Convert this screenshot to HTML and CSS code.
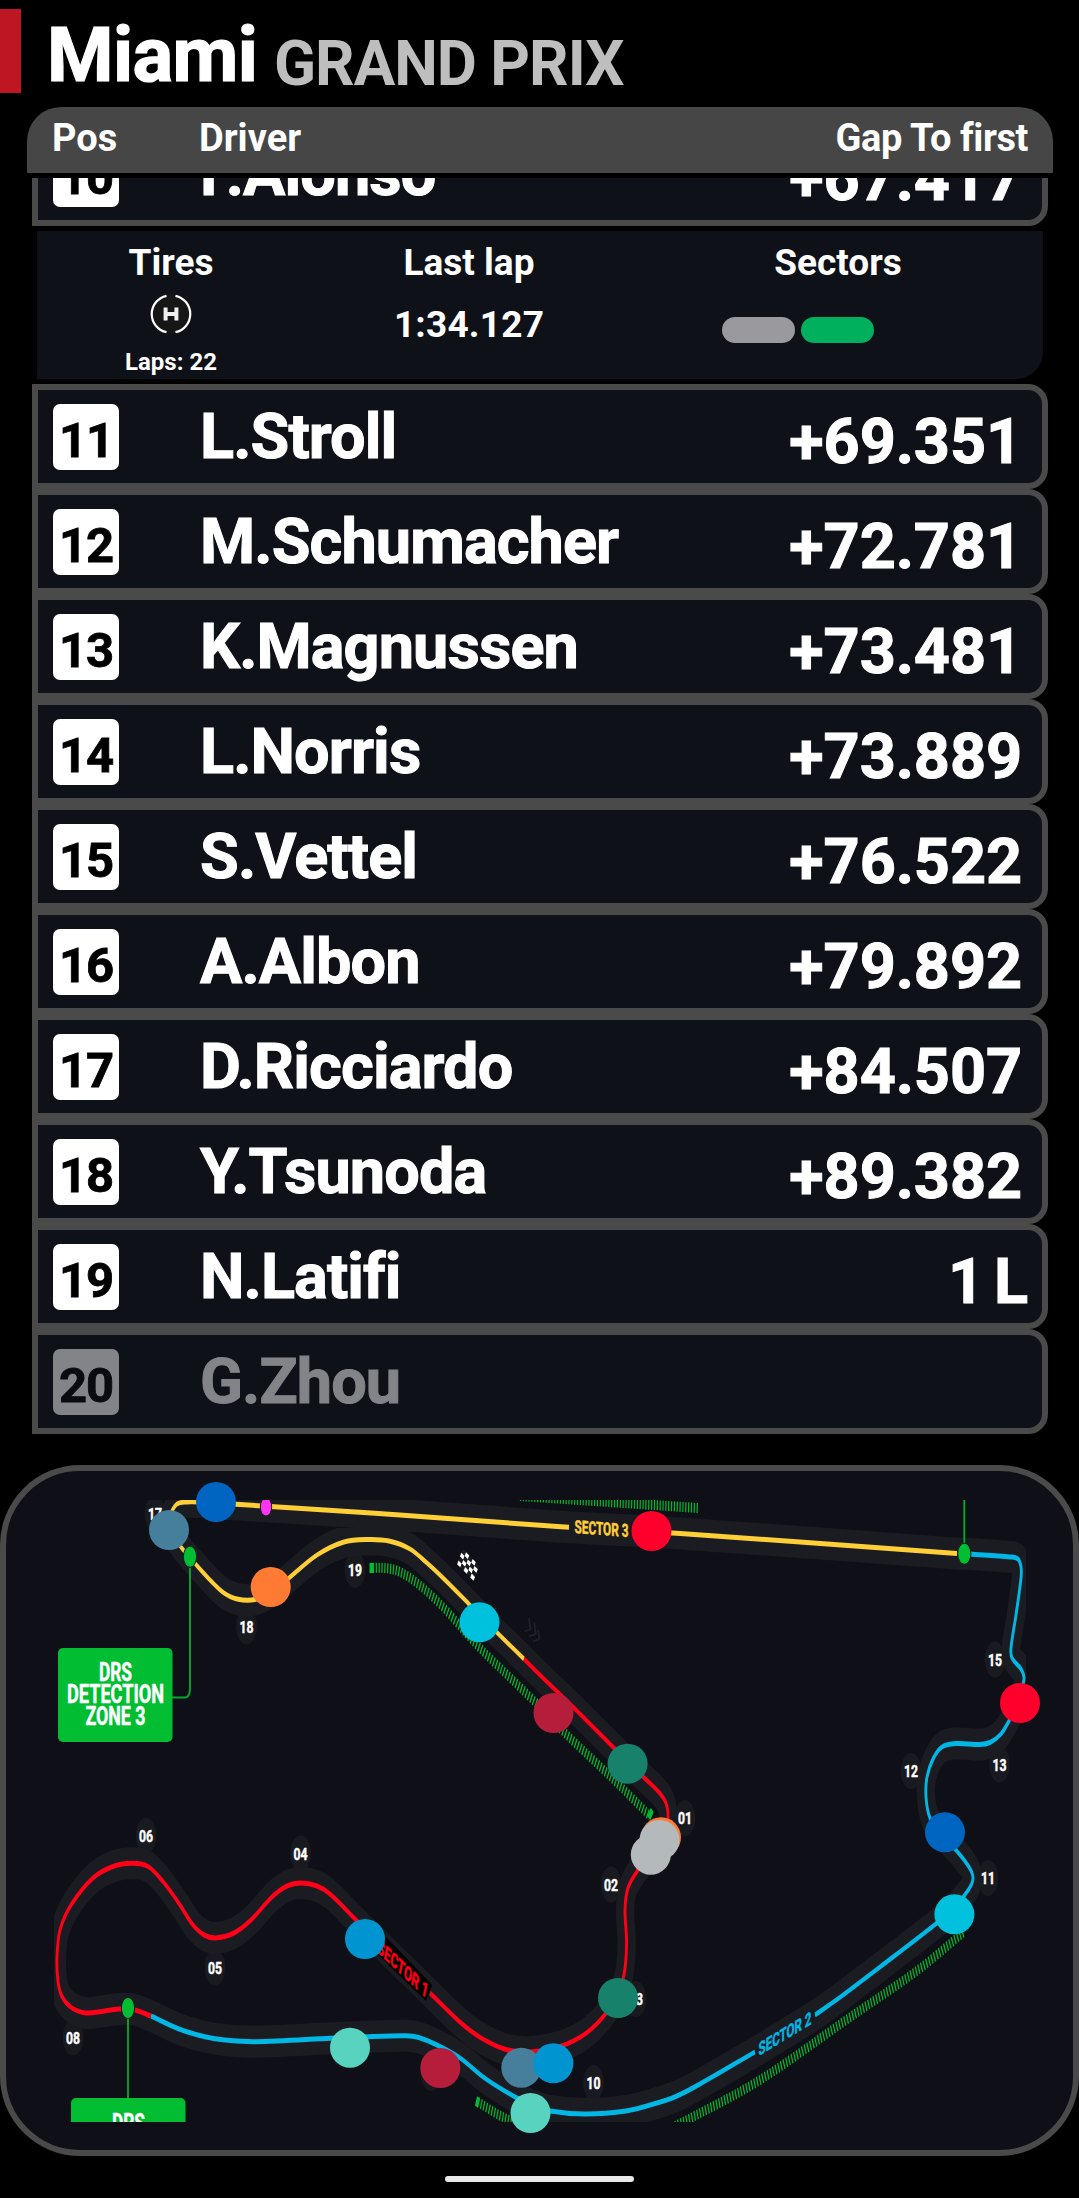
FILE: index.html
```
<!DOCTYPE html>
<html lang="en">
<head>
<meta charset="utf-8">
<title>Miami Grand Prix</title>
<link rel="stylesheet" href="styles.css">
</head>
<body>
<header class="title">
  <span class="title-mark"></span>
  <h1><span class="city">Miami</span><span class="event">GRAND PRIX</span></h1>
</header>

<div class="table-head">
  <span class="head-pos">Pos</span>
  <span class="head-driver">Driver</span>
  <span class="head-gap">Gap To first</span>
</div>

<main class="board">
  <div class="row first"><span class="pos">10</span><span class="name">F.Alonso</span><span class="gap">+67.417</span></div>
  <section class="details">
    <div class="detail tires">
      <h2>Tires</h2>
      <svg class="tire" viewBox="0 0 42 42" width="42" height="42">
        <circle cx="21" cy="21" r="20" fill="#161616"/>
        <path d="M16.5 2.8A18.6 18.6 0 0 0 16.5 39.2M25.5 2.8A18.6 18.6 0 0 1 25.5 39.2" fill="none" stroke="#fff" stroke-width="2.2"/>
        <path d="M15.6 14.5v13M26.4 14.5v13M15.6 21h10.8" fill="none" stroke="#eee" stroke-width="4"/>
      </svg>
      <span class="laps">Laps: 22</span>
    </div>
    <div class="detail last"><h2>Last lap</h2><span class="time">1:34.127</span></div>
    <div class="detail sectors"><h2>Sectors</h2><div class="pills"><i class="pill"></i><i class="pill best"></i></div></div>
  </section>
  <div class="row"><span class="pos">11</span><span class="name">L.Stroll</span><span class="gap">+69.351</span></div>
  <div class="row"><span class="pos">12</span><span class="name">M.Schumacher</span><span class="gap">+72.781</span></div>
  <div class="row"><span class="pos">13</span><span class="name">K.Magnussen</span><span class="gap">+73.481</span></div>
  <div class="row"><span class="pos">14</span><span class="name">L.Norris</span><span class="gap">+73.889</span></div>
  <div class="row"><span class="pos">15</span><span class="name">S.Vettel</span><span class="gap">+76.522</span></div>
  <div class="row"><span class="pos">16</span><span class="name">A.Albon</span><span class="gap">+79.892</span></div>
  <div class="row"><span class="pos">17</span><span class="name">D.Ricciardo</span><span class="gap">+84.507</span></div>
  <div class="row"><span class="pos">18</span><span class="name">Y.Tsunoda</span><span class="gap">+89.382</span></div>
  <div class="row"><span class="pos">19</span><span class="name">N.Latifi</span><span class="gap lapped">1 L</span></div>
  <div class="row out"><span class="pos">20</span><span class="name">G.Zhou</span></div>
</main>

<section class="map">
  <svg class="circuit" viewBox="0 1465 1079 691" width="1079" height="691">
    <defs><clipPath id="frame"><rect x="54" y="1500" width="972" height="622"/></clipPath></defs>
    <g clip-path="url(#frame)">
      <g id="bubbles"></g>
      <g id="track" transform="scale(.57 1)"></g>
      <g id="flag"></g>
      <g id="labels"></g>
    </g>
    <g id="cars"></g>
  </svg>
</section>
<div class="home-bar"></div>
<script src="map.js"></script>
</body>
</html>
```
FILE: styles.css
```
* { box-sizing: border-box; }
body {
  margin: 0;
  height: 2198px;
  overflow: hidden;
  background: #000;
  color: #fff;
  font-family: Roboto, "Noto Sans", sans-serif;
  font-weight: 700;
  display: flex;
  flex-direction: column;
}
h1, h2 { margin: 0; font-weight: 700; }

.title { height: 107px; padding-top: 9px; display: flex; }
.title-mark { width: 21px; height: 84px; background: #be1622; }
.title h1 { display: flex; padding-left: 26px; line-height: 88px; white-space: nowrap; }
.city { font-size: 76px; letter-spacing: -.6px; width: 227px; padding-top: 2px; -webkit-text-stroke: 1.2px; }
.event { font-size: 63px; color: #bebebe; letter-spacing: -1px; padding-top: 11px; transform: scaleX(.98); transform-origin: left; }

.table-head {
  margin: 0 26px 5px 27px;
  height: 66px;
  flex: none;
  padding: 0 25px 4px 25px;
  border-radius: 34px 34px 0 0;
  background: #464646;
  display: grid;
  grid-template-columns: 147px 1fr auto;
  align-items: center;
  font-size: 38px;
}
.head-gap { letter-spacing: -.4px; }

.board {
  height: 1256px;
  flex: none;
  padding: 0 31px 0 32px;
  overflow: hidden;
}
.row {
  height: 105px;
  border: 6px solid #4a4a4a;
  border-radius: 0 20px 20px 0;
  background: #0f1119;
  padding: 0 20px 0 15px;
  display: grid;
  grid-template-columns: 147px 1fr auto;
  line-height: 93px;
  white-space: nowrap;
}
.row.first { margin-top: -57px; }
.pos {
  width: 66px;
  height: 66px;
  margin-top: 14px;
  border-radius: 7px;
  background: #fff;
  color: #000;
  font-size: 49px;
  line-height: 73px;
  text-align: center;
  letter-spacing: -1px;
  -webkit-text-stroke: .8px;
}
.name { font-size: 63px; letter-spacing: -.9px; -webkit-text-stroke: 1px; }
.gap { font-size: 63px; letter-spacing: -.1px; margin-top: 5px; -webkit-text-stroke: 1px; }
.gap.lapped { letter-spacing: -3px; margin-right: -3px; }
.out .pos { background: #838488; color: #0a0b10; }
.out .name { color: #838488; }

.details {
  height: 148px;
  margin: 5px 5px 5px 5px;
  background: #0f1119;
  border-radius: 0 0 27px 0;
  display: grid;
  grid-template-columns: 268px 328px 1fr;
}
.detail { display: flex; flex-direction: column; align-items: center; }
.detail h2 { font-size: 37px; line-height: 44px; margin-top: 10px; }
.tire { margin-top: 8px; }
.laps { font-size: 24px; line-height: 30px; margin-top: 12px; }
.time { font-size: 37px; line-height: 44px; margin-top: 18px; letter-spacing: .2px; }
.pills { display: flex; gap: 6px; margin: 32px 80px 0 0; }
.pill { width: 73px; height: 26px; border-radius: 13px; background: #9a9a9e; }
.pill.best { background: #00b05c; }

.map {
  height: 691px;
  flex: none;
  margin-top: 31px;
  border: 6px solid #4a4a4a;
  border-radius: 80px;
  background: #0f1017;
}
.circuit { display: block; margin: -6px; }
.turn, .zone, .sector { font-family: Roboto, sans-serif; font-weight: 700; text-anchor: middle; stroke-width: .5px; }
.turn { font-size: 17px; fill: #fff; stroke: #fff; }
.zone { font-size: 25px; fill: #fff; stroke: #fff; }
.sector { font-size: 18px; }
.s1 { fill: #ff0018; stroke: #ff0018; }
.s2 { fill: #00b7e6; stroke: #00b7e6; }
.s3 { fill: #ffcf37; stroke: #ffcf37; }

.home-bar { width: 189px; height: 6px; margin: 20px auto 0; border-radius: 3px; background: #e8e8e8; flex: none; }
```
FILE: map.js
```
const SX = 0.57;

// Centre line of the circuit, split where the sector colour changes.
const sector3a = [[524,1659],[496,1631.5],[468,1603],[440,1575],[427,1563],[410,1549],[389,1541],[368,1539.5],[344,1542],[317,1555],[289,1578],[272,1592],[255,1599.5],[237,1599],[224,1593],[212,1582],[196,1564.5],[181,1547],[170,1530],[169,1518],[172,1511],[177,1504],[186,1502],[200,1502],[236,1504.3],[400,1515],[540,1525.3],[569,1527.3]];
const sector3b = [[636,1530.8],[672,1533],[800,1542],[957,1553.5]];
const sector2a = [[970,1554],[1010,1557],[1018,1559],[1021,1567],[1021,1578],[1016,1615],[1011,1648],[1012,1658],[1021,1669],[1024,1677],[1023,1684],[1018,1703],[1009,1721],[1001,1734],[990,1742.5],[980,1744.5],[956,1743.5],[942,1747],[933,1759],[927,1777],[926,1797],[930,1818],[943,1836],[956,1850],[969,1867],[973,1878],[969,1889],[954,1908],[937,1923],[880,1967],[839,1998],[815,2015]];
const sector2b = [[755,2052],[700,2084],[677,2096],[657,2103],[626,2111],[585,2114],[550,2111],[532,2105],[516,2097.5],[486,2079],[460,2058],[437,2045],[418,2037.3],[406,2035.7],[365,2036.7],[331,2038.3],[255,2041.7],[225,2040],[206,2037],[179,2029],[151,2016]];
const sector1a = [[151,2016],[134,2009.7],[119,2009],[100,2011.7],[86,2013],[72,2008],[62,1996.5],[58,1981.5],[57,1957],[60,1930],[71,1905],[93,1878],[113,1866.5],[132,1863.3],[148,1866.5],[163,1881.5],[179,1903.5],[193,1925],[205,1935.5],[217,1937.8],[234,1933],[251,1920],[272,1897],[287,1886],[301,1883],[317,1886],[330,1894],[356,1920],[375,1939]];
const sector1b = [[430,1993],[461,2023],[482,2038.5],[506,2049.5],[530,2052],[560,2046.5],[585,2034],[605,2014.5],[618,1993],[624,1975],[626.6,1943],[625,1910],[628,1888],[638,1870],[651,1854],[663,1835],[668,1818],[664,1799],[643,1776.7],[614,1748],[573,1707],[540,1675],[524,1659]];

const drs = [
  [[370,1568],[384,1568],[398,1571],[417,1583],[444,1608],[475,1643],[535,1702],[564,1732],[612,1778],[650,1816]],
  [[478,2102],[499,2115],[530,2130]],
  [[675,2126],[691,2118],[760,2080],[849,2018],[918,1970],[964,1932]],
  [[520,1496],[698,1508]]
];

// Smooth path through the points; handles are a third of each segment.
function smooth(points) {
  const p = points.map(([x, y]) => [x / SX, y]);
  const dir = p.map((_, i) => {
    const a = p[Math.max(i - 1, 0)], b = p[Math.min(i + 1, p.length - 1)];
    const l = Math.hypot(b[0] - a[0], b[1] - a[1]);
    return [(b[0] - a[0]) / l, (b[1] - a[1]) / l];
  });
  let d = `M${p[0]}`;
  for (let i = 1; i < p.length; i++) {
    const a = p[i - 1], b = p[i], h = Math.hypot(b[0] - a[0], b[1] - a[1]) / 3;
    d += `C${a[0] + dir[i - 1][0] * h} ${a[1] + dir[i - 1][1] * h} ${b[0] - dir[i][0] * h} ${b[1] - dir[i][1] * h} ${b}`;
  }
  return d;
}
const line = (pts, color, width, extra = '') =>
  `<path d="${smooth(pts)}" fill="none" stroke="${color}" stroke-width="${width}" ${extra}/>`;
const loop = [...sector3a, ...sector3b, ...sector2a, ...sector2b, ...sector1a.slice(1), ...sector1b];

document.getElementById('track').innerHTML =
  line(loop, '#1b1c22', 32, 'stroke-linejoin="round"') +
  drs.map(s => line(s, '#00b42f', 10, 'stroke-dasharray="2.2 2.8"')).join('') +
  line([[369.5,1568],[373,1568]], '#00bd32', 10) +
  line([[649,1812],[652,1816]], '#00bd32', 10) +
  line([[476,2101],[479,2103]], '#00bd32', 10) +
  [sector3a, sector3b].map(s => line(s, '#ffcf37', 5)).join('') +
  [sector2a, sector2b].map(s => line(s, '#00b7e6', 5)).join('') +
  [sector1a, sector1b].map(s => line(s, '#ff0018', 5)).join('');

const turns = [['17',155,1514],['18',246.5,1626.5],['19',355,1570],['15',995,1659.5],['13',999.5,1764.5],['12',911,1771],['11',988,1878],['01',685,1818],['02',611,1884.5],['03',636,1999],['04',300.5,1853.5],['05',215,1967.5],['06',146,1836],['08',73,2037.5],['10',593.5,2083],['',431,2073]];
document.getElementById('bubbles').innerHTML = turns.map(([, x, y]) =>
  `<ellipse cx="${x}" cy="${y}" rx="10.3" ry="18" fill="#191a20"/>`).join('');

const fitted = (cls, str, w, more) =>
  `<text class="${cls}" textLength="${w}" lengthAdjust="spacingAndGlyphs" ${more}>${str}</text>`;

document.getElementById('labels').innerHTML =
  turns.filter(t => t[0]).map(([n, x, y]) => fitted('turn', n, 14, `x="${x}" y="${y + 6}"`)).join('') +
  `<path d="M190 1557V1689Q190 1697 185 1697.5H172M128 2008V2100M964.3 1500V1550" fill="none" stroke="#00a82d" stroke-width="1.9"/>
   <rect x="58" y="1648" width="114.5" height="94" rx="5" fill="#00bd32"/>
   <rect x="71" y="2098" width="114.5" height="94" rx="5" fill="#00bd32"/>
   <ellipse cx="190" cy="1556.7" rx="6.6" ry="10.6" fill="#00bd32" stroke="#17181e" stroke-width="1"/>
   <ellipse cx="128" cy="2008" rx="6.6" ry="10.6" fill="#00bd32" stroke="#17181e" stroke-width="1"/>
   <ellipse cx="964.3" cy="1553.7" rx="6.6" ry="10.6" fill="#00bd32" stroke="#17181e" stroke-width="1"/>
   <ellipse cx="266" cy="1507" rx="5.7" ry="9" fill="#ff35f5" stroke="#17181e" stroke-width="1"/>` +
  fitted('zone', 'DRS', 33, 'x="115.5" y="1681"') +
  fitted('zone', 'DETECTION', 97, 'x="115.5" y="1703"') +
  fitted('zone', 'ZONE 3', 60, 'x="115.5" y="1725"') +
  fitted('zone', 'DRS', 33, 'x="128.5" y="2132"') +
  fitted('sector s3', 'SECTOR 3', 54, 'transform="translate(601.5 1535) skewY(4)"') +
  `<path d="M386 1937L432 1985L426 2001L376 1953Z" fill="#000"/>` +
  fitted('sector s1', 'SECTOR 1', 50, 'transform="translate(401.5 1975) matrix(1 .95 -.2 1 0 0)"') +
  fitted('sector s2', 'SECTOR 2', 53, 'transform="translate(785 2040) matrix(1 -.6 0 1 0 0)"');

// Chequered flag and direction chevrons beside the start line.
let flag = '';
for (let r = 0; r < 4; r++) for (let c = 0; c < 5; c++)
  flag += `<rect x="${c * 3.3}" y="${r * 4}" width="3.3" height="4" fill="${(r + c) % 2 ? '#fff' : '#1c1c1c'}"/>`;
document.getElementById('flag').innerHTML =
  `<g transform="matrix(1 1 -.35 .95 462.7 1549)">${flag}</g>
   <path d="M529 1618L530.5 1629.5L524.5 1631.5M534.2 1622.5L535.7 1634.2L529 1636.3M538 1630L539.5 1638.5L533.3 1641.5" fill="none" stroke="#202127" stroke-width="1.8"/>`;

const cars = [[216,1502,'#0064c1'],[169,1530,'#467f9b'],[270.7,1587,'#ff7b33'],[479.5,1622.3,'#00c1dd'],[651.5,1531,'#ff002c'],[553.5,1713,'#b61d3b'],[627.6,1763.7,'#18816b'],[1020,1703,'#ff002c'],[945,1832.3,'#0064c1'],[954.4,1914.3,'#00c1dd'],[661,1837.3,'#ff7b33'],[659.5,1840,'#b4b9bc'],[650.8,1854.7,'#b4b9bc'],[618,1998,'#18816b'],[365,1939,'#0095d0'],[350,2047.7,'#58d3bf'],[440.3,2068,'#b61d3b'],[521.3,2067.7,'#467f9b'],[553.4,2063.3,'#0095d0'],[530.5,2113,'#58d3bf']];
document.getElementById('cars').innerHTML = cars.map(([x, y, c]) =>
  `<circle cx="${x}" cy="${y}" r="20" fill="${c}"/>`).join('');
```
